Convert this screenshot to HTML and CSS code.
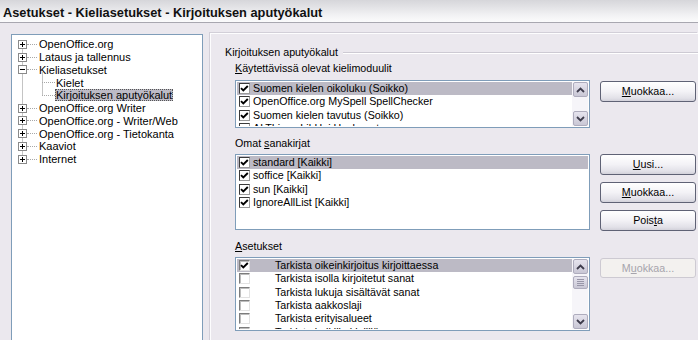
FILE: index.html
```html
<!DOCTYPE html>
<html>
<head>
<meta charset="utf-8">
<link rel="stylesheet" href="styles.css">
</head>
<body>
<div class="titlebar">Asetukset - Kieliasetukset - Kirjoituksen aputyökalut</div>
<div class="main">
  <div class="tree">
    <div class="trow"><svg class="exp" width="9" height="9"><rect x=".5" y=".5" width="8" height="8" fill="#fff" stroke="#8a8a8a"/><path d="M2 4.5h5M4.5 2v5" stroke="#000"/></svg><span class="hl"></span><span class="tlabel">OpenOffice.org</span></div>
    <div class="trow"><svg class="exp" width="9" height="9"><rect x=".5" y=".5" width="8" height="8" fill="#fff" stroke="#8a8a8a"/><path d="M2 4.5h5M4.5 2v5" stroke="#000"/></svg><span class="hl"></span><span class="tlabel">Lataus ja tallennus</span></div>
    <div class="trow"><svg class="exp" width="9" height="9"><rect x=".5" y=".5" width="8" height="8" fill="#fff" stroke="#8a8a8a"/><path d="M2 4.5h5" stroke="#000"/></svg><span class="hl"></span><span class="tlabel">Kieliasetukset</span></div>
    <div class="trow child"><span class="hl hl-child"></span><span class="tlabel">Kielet</span></div>
    <div class="trow child"><span class="hl hl-child"></span><span class="tlabel tsel">Kirjoituksen aputyökalut</span></div>
    <div class="trow"><svg class="exp" width="9" height="9"><rect x=".5" y=".5" width="8" height="8" fill="#fff" stroke="#8a8a8a"/><path d="M2 4.5h5M4.5 2v5" stroke="#000"/></svg><span class="hl"></span><span class="tlabel">OpenOffice.org Writer</span></div>
    <div class="trow"><svg class="exp" width="9" height="9"><rect x=".5" y=".5" width="8" height="8" fill="#fff" stroke="#8a8a8a"/><path d="M2 4.5h5M4.5 2v5" stroke="#000"/></svg><span class="hl"></span><span class="tlabel">OpenOffice.org - Writer/Web</span></div>
    <div class="trow"><svg class="exp" width="9" height="9"><rect x=".5" y=".5" width="8" height="8" fill="#fff" stroke="#8a8a8a"/><path d="M2 4.5h5M4.5 2v5" stroke="#000"/></svg><span class="hl"></span><span class="tlabel">OpenOffice.org - Tietokanta</span></div>
    <div class="trow"><svg class="exp" width="9" height="9"><rect x=".5" y=".5" width="8" height="8" fill="#fff" stroke="#8a8a8a"/><path d="M2 4.5h5M4.5 2v5" stroke="#000"/></svg><span class="hl"></span><span class="tlabel">Kaaviot</span></div>
    <div class="trow"><svg class="exp" width="9" height="9"><rect x=".5" y=".5" width="8" height="8" fill="#fff" stroke="#8a8a8a"/><path d="M2 4.5h5M4.5 2v5" stroke="#000"/></svg><span class="hl"></span><span class="tlabel">Internet</span></div>
  </div>

  <div class="panel">
    <div class="legend"><span>Kirjoituksen aputyökalut</span><span class="rule"></span></div>
    <div class="content">
      <div class="label"><u>K</u>äytettävissä olevat kielimoduulit</div>
      <div class="row">
        <div class="list list1">
          <div class="items">
            <div class="item sel"><span class="cb"><svg width="9" height="9"><path d="M1 4.2l2.3 2.3L7.8 2" fill="none" stroke="#000" stroke-width="1.9"/></svg></span><span class="itext">Suomen kielen oikoluku (Soikko)</span></div>
            <div class="item"><span class="cb"><svg width="9" height="9"><path d="M1 4.2l2.3 2.3L7.8 2" fill="none" stroke="#000" stroke-width="1.9"/></svg></span><span class="itext">OpenOffice.org MySpell SpellChecker</span></div>
            <div class="item"><span class="cb"><svg width="9" height="9"><path d="M1 4.2l2.3 2.3L7.8 2" fill="none" stroke="#000" stroke-width="1.9"/></svg></span><span class="itext">Suomen kielen tavutus (Soikko)</span></div>
            <div class="item"><span class="cb"></span><span class="itext">ALTLinux LibHnj Hyphenator</span></div>
          </div>
          <div class="scroll">
            <span class="sbtn"><svg width="9" height="6"><path d="M1 5L4.5 1.5L8 5" fill="none" stroke="#3e3c4c" stroke-width="1.8"/></svg></span>
            <span class="track"></span>
            <span class="sbtn"><svg width="9" height="6"><path d="M1 1L4.5 4.5L8 1" fill="none" stroke="#3e3c4c" stroke-width="1.8"/></svg></span>
          </div>
        </div>
        <div class="buttons first">
          <div class="btn"><u>M</u>uokkaa...</div>
        </div>
      </div>

      <div class="label sp"><span>Omat <u>s</u>anakirjat</span></div>
      <div class="row">
        <div class="list list2">
          <div class="items">
            <div class="item sel"><span class="cb"><svg width="9" height="9"><path d="M1 4.2l2.3 2.3L7.8 2" fill="none" stroke="#000" stroke-width="1.9"/></svg></span><span class="itext">standard [Kaikki]</span></div>
            <div class="item"><span class="cb"><svg width="9" height="9"><path d="M1 4.2l2.3 2.3L7.8 2" fill="none" stroke="#000" stroke-width="1.9"/></svg></span><span class="itext">soffice [Kaikki]</span></div>
            <div class="item"><span class="cb"><svg width="9" height="9"><path d="M1 4.2l2.3 2.3L7.8 2" fill="none" stroke="#000" stroke-width="1.9"/></svg></span><span class="itext">sun [Kaikki]</span></div>
            <div class="item"><span class="cb"><svg width="9" height="9"><path d="M1 4.2l2.3 2.3L7.8 2" fill="none" stroke="#000" stroke-width="1.9"/></svg></span><span class="itext">IgnoreAllList [Kaikki]</span></div>
          </div>
        </div>
        <div class="buttons">
          <div class="btn"><u>U</u>usi...</div>
          <div class="btn"><u>M</u>uokkaa...</div>
          <div class="btn">Pois<u>t</u>a</div>
        </div>
      </div>

      <div class="label sp"><u>A</u>setukset</div>
      <div class="row">
        <div class="list list3">
          <div class="items">
            <div class="item sel"><span class="cb cb3"><svg width="9" height="9"><path d="M1 4.2l2.3 2.3L7.8 2" fill="none" stroke="#000" stroke-width="1.9"/></svg></span><span class="itext wide">Tarkista oikeinkirjoitus kirjoittaessa</span></div>
            <div class="item"><span class="cb cb3"></span><span class="itext wide">Tarkista isolla kirjoitetut sanat</span></div>
            <div class="item"><span class="cb cb3"></span><span class="itext wide">Tarkista lukuja sisältävät sanat</span></div>
            <div class="item"><span class="cb cb3"></span><span class="itext wide">Tarkista aakkoslaji</span></div>
            <div class="item"><span class="cb cb3"></span><span class="itext wide">Tarkista erityisalueet</span></div>
            <div class="item"><span class="cb cb3"></span><span class="itext wide">Tarkista kaikilla kielillä</span></div>
          </div>
          <div class="scroll">
            <span class="sbtn"><svg width="9" height="6"><path d="M1 5L4.5 1.5L8 5" fill="none" stroke="#3e3c4c" stroke-width="1.8"/></svg></span>
            <span class="sbtn thumb"><svg width="7" height="7"><path d="M0 .5h7M0 2.5h7M0 4.5h7M0 6.5h7" stroke="#9896a8"/></svg></span>
            <span class="track"></span>
            <span class="sbtn"><svg width="9" height="6"><path d="M1 1L4.5 4.5L8 1" fill="none" stroke="#3e3c4c" stroke-width="1.8"/></svg></span>
          </div>
        </div>
        <div class="buttons first">
          <div class="btn disabled">M<u>u</u>okkaa...</div>
        </div>
      </div>
    </div>
  </div>
</div>
</body>
</html>
```
FILE: styles.css
```css
* { box-sizing: border-box; margin: 0; padding: 0; }
html, body { width: 698px; height: 340px; overflow: hidden; }
body {
  background: #ebe8ee;
  font-family: "Liberation Sans", Arial, sans-serif;
  font-size: 10.7px;
  color: #000;
}
u { text-decoration: underline; text-underline-offset: 1px; }

.titlebar {
  height: 23px;
  padding: 5px 0 0 3px;
  line-height: 16px;
  font-weight: bold;
  font-size: 12.8px;
  color: #111;
  background: linear-gradient(#d6d6da, #f2f2f4 70%, #fbfbfc);
  border-bottom: 1px solid #a8a7b0;
  white-space: nowrap;
}

.main {
  display: flex;
  align-items: flex-start;
  padding: 10px 0 0 11px;
}

.tree {
  width: 192px;
  height: 320px;
  margin-top: 1px;
  border: 1px solid #7f9db9;
  background-color: #fff;
  background-image:
    linear-gradient(#c4c4c4, #c4c4c4),
    linear-gradient(#c4c4c4, #c4c4c4);
  background-repeat: no-repeat;
  background-position: 10px 9px, 30px 37px;
  background-size: 1px 115px, 1px 24px;
  padding-top: 3px;
  font-size: 11px;
}
.trow {
  height: 12.75px;
  display: flex;
  align-items: center;
  padding-left: 6px;
  white-space: nowrap;
}
.trow.child { padding-left: 30px; }
.exp { display: block; flex: none; }
.hl {
  width: 10px;
  height: 0;
  border-top: 1px dotted #a8a8a8;
  flex: none;
}
.hl-child { width: 13px; }
.tlabel { margin-left: 1px; padding: 0 1px; line-height: 12px; }
.trow.child .tlabel { margin-left: 0; }
.tsel {
  background: #bdbbc6;
  outline: 1px dotted #555;
  outline-offset: -1px;
}

.panel {
  flex: 1;
  margin-left: 7px;
  height: 320px;
  border-left: 1px solid #fdfdfe;
  border-top: 1px solid #fdfdfe;
  box-shadow: -1px -1px 0 #d2cfd8;
  padding: 12px 0 0 14px;
}
.legend {
  display: flex;
  align-items: center;
  height: 13px;
  line-height: 13px;
  white-space: nowrap;
}
.rule {
  flex: 1;
  margin-left: 5px;
  border-top: 1px solid #cdcad3;
  border-bottom: 1px solid #fff;
}
.content { padding-left: 10px; }
.label {
  height: 13px;
  line-height: 13px;
  margin-top: 3px;
  margin-bottom: 4px;
  white-space: nowrap;
}
.label:first-child { margin-bottom: 5px; }
.label.sp { margin-top: 9px; }

.row { display: flex; align-items: flex-start; }
.list {
  width: 355px;
  display: flex;
  border: 1px solid #7f9db9;
  background: #fff;
  padding: 1px;
  overflow: hidden;
}
.list1 { height: 48px; }
.list2 { height: 76px; }
.list3 { height: 74px; }
.items { flex: 1; overflow: hidden; }
.item {
  height: 13.33px;
  display: flex;
  align-items: center;
  padding-left: 2px;
  white-space: nowrap;
}
.item.sel { background: #bcbac5; }
.cb {
  width: 11px;
  height: 11px;
  flex: none;
  background: #fff;
  border: 1px solid;
  border-color: #3a3a3a #9a9a9a #9a9a9a #3a3a3a;
  display: flex;
  align-items: center;
  justify-content: center;
}
.cb svg { display: block; }
.cb3 {
  border-color: #7c7c7c #e2e2e2 #e2e2e2 #7c7c7c;
  box-shadow: inset 1px 1px 0 #bdbdbd;
}
.itext { margin-left: 3px; line-height: 13px; }
.itext.wide { margin-left: 25px; }

.scroll {
  width: 16px;
  flex: none;
  display: flex;
  flex-direction: column;
  align-items: flex-end;
  background: #f6f5f9;
}
.sbtn {
  width: 15px;
  height: 15px;
  flex: none;
  border: 1px solid #aeacbd;
  border-radius: 2px;
  background: linear-gradient(#e6e4ee, #c9c7d5);
  display: flex;
  align-items: center;
  justify-content: center;
}
.sbtn svg { display: block; }
.sbtn.thumb { height: 13px; margin-top: 2px; }
.track { flex: 1; }

.buttons {
  margin-left: 10px;
  display: flex;
  flex-direction: column;
  gap: 7px;
}
.buttons.first { padding-top: 1px; }
.btn {
  width: 96px;
  height: 21px;
  border: 1px solid #5f6275;
  border-radius: 3px;
  background: linear-gradient(#ffffff, #f3f2f6 50%, #e2e1e8 85%, #d2d1da);
  text-align: center;
  line-height: 19px;
  white-space: nowrap;
}
.btn.disabled {
  height: 20px;
  line-height: 18px;
  border-color: #cdcad2;
  background: #f3f1ef;
  color: #a6a4ac;
}
```
